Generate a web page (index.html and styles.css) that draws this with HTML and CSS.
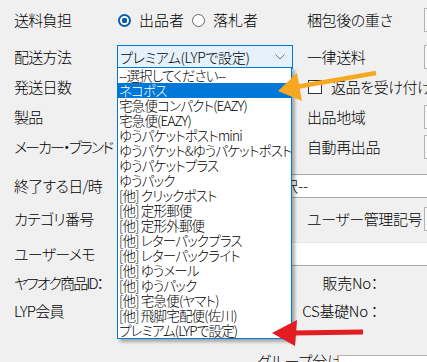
FILE: index.html
```html
<!DOCTYPE html>
<html lang="ja">
<head>
  <meta charset="UTF-8">
  <title>配送方法</title>
  <link rel="stylesheet" href="styles.css">
</head>
<body>

<div class="page">
  <div class="form">
    <!-- 送料負担 -->
    <div class="row">
      <div class="label">送料負担</div>
      <div class="field radios">
        <span class="radio"><span class="dot on"></span>出品者</span>
        <span class="radio"><span class="dot"></span>落札者</span>
      </div>
      <div class="side"><span class="side-label">梱包後の重さ</span><span class="box"></span></div>
    </div>

    <!-- 配送方法 -->
    <div class="row row-ship">
      <div class="label">配送方法</div>
      <div class="field">
        <div class="select">
          <span>プレミアム(LYPで設定)</span>
          <svg class="chevron" width="10" height="6" viewBox="0 0 10 6"><polyline points="0.5,0.5 5,5 9.5,0.5" fill="none" stroke="#777" stroke-width="1"/></svg>
        </div>
        <ul class="options">
          <li>--選択してください--</li>
          <li class="active">ネコポス</li>
          <li>宅急便コンパクト(EAZY)</li>
          <li>宅急便(EAZY)</li>
          <li>ゆうパケットポストmini</li>
          <li>ゆうパケット&amp;ゆうパケットポスト</li>
          <li>ゆうパケットプラス</li>
          <li>ゆうパック</li>
          <li>[他] クリックポスト</li>
          <li>[他] 定形郵便</li>
          <li>[他] 定形外郵便</li>
          <li>[他] レターパックプラス</li>
          <li>[他] レターパックライト</li>
          <li>[他] ゆうメール</li>
          <li>[他] ゆうパック</li>
          <li>[他] 宅急便(ヤマト)</li>
          <li>[他] 飛脚宅配便(佐川)</li>
          <li>プレミアム(LYPで設定)</li>
        </ul>
      </div>
      <div class="side"><span class="side-label">一律送料</span><span class="box"></span></div>
    </div>

    <!-- 発送日数 -->
    <div class="row row-std">
      <div class="label">発送日数</div>
      <div class="field"></div>
      <div class="side"><span class="check"></span>返品を受け付ける</div>
    </div>

    <!-- 製品 -->
    <div class="row row-std">
      <div class="label">製品</div>
      <div class="field"></div>
      <div class="side"><span class="side-label">出品地域</span><span class="box"></span></div>
    </div>

    <!-- メーカー・ブランド -->
    <div class="row row-std">
      <div class="label label-long">メーカー・ブランド</div>
      <div class="field"></div>
      <div class="side"><span class="side-label">自動再出品</span><span class="box"></span></div>
    </div>

    <!-- 終了する日/時 -->
    <div class="row row-end">
      <div class="label">終了する日/時</div>
      <div class="date-box"></div>
      <div class="time-select">--選択--</div>
    </div>

    <!-- カテゴリ番号 -->
    <div class="row row-cat">
      <div class="label">カテゴリ番号</div>
      <div class="field"></div>
      <div class="side"><span class="side-label">ユーザー管理記号</span><span class="box"></span></div>
    </div>

    <!-- ユーザーメモ -->
    <div class="row row-memo">
      <div class="label">ユーザーメモ</div>
      <div class="memo-input"></div>
    </div>

    <!-- ヤフオク商品ID -->
    <div class="row row-id">
      <div class="label label-long">ヤフオク商品ID：</div>
      <div class="field"></div>
      <div class="side-right">販売No：</div>
    </div>

    <!-- LYP会員 -->
    <div class="row row-lyp">
      <div class="label">LYP会員</div>
      <div class="field"></div>
      <div class="side-right">CS基礎No ：</div>
    </div>

    <!-- グループ分け -->
    <div class="row row-group">
      <div class="label"></div>
      <div class="group-label">グループ分け</div>
      <div class="group-input"></div>
    </div>
  </div>

  <!-- 注釈の矢印 -->
  <svg class="arrows" width="427" height="362" viewBox="0 0 427 362">
    <line x1="376" y1="73" x2="296" y2="87" stroke="#f7a823" stroke-width="4.5"/>
    <polygon points="278,91 297,73 302,101" fill="#f7a823"/>
    <line x1="363" y1="332" x2="292" y2="333" stroke="#e31b23" stroke-width="5"/>
    <polygon points="272,333 297,320 295,346" fill="#e31b23"/>
  </svg>
</div>

</body>
</html>
```

FILE: styles.css
```css
body {
  margin: 0;
  background-color: #f0f0f0;
  font-family: "Noto Sans CJK JP", "Noto Sans", sans-serif;
  font-size: 15px;
  font-weight: 300;
  color: #000;
  font-feature-settings: "palt";
  overflow: hidden;
}

.page {
  position: relative;
  width: 427px;
  height: 362px;
  overflow: hidden;
}

.form {
  padding: 10px 0 0 14px;
}

.row {
  display: flex;
  align-items: center;
  height: 20px;
  line-height: 20px;
  white-space: nowrap;
}

.row-ship { margin-top: 17px; }
.row-std { margin-top: 10px; }
.row-end { margin-top: 19px; }
.row-cat { margin-top: 13px; }
.row-memo { margin-top: 15px; }
.row-id { margin-top: 9px; }
.row-lyp { margin-top: 8px; }
.row-group { margin-top: 30px; }

.label {
  width: 103px;
  flex: none;
  letter-spacing: -0.7px;
}

.label-long {
  letter-spacing: -1.9px;
}

.field {
  width: 176px;
  flex: none;
  position: relative;
}

.side {
  margin-left: 14px;
  display: flex;
  align-items: center;
  letter-spacing: -0.4px;
}

.side-label {
  width: 117px;
  flex: none;
}

.box {
  width: 40px;
  height: 24px;
  box-sizing: border-box;
  border: 1px solid #b4b4b4;
  background-color: #f7f7f7;
  flex: none;
}

/* radio buttons */
.radios {
  display: flex;
  align-items: center;
}

.radio {
  display: inline-flex;
  align-items: center;
  margin-right: 7px;
}

.dot {
  width: 13px;
  height: 13px;
  box-sizing: border-box;
  border: 1px solid #666;
  border-radius: 50%;
  background-color: #fff;
  margin-left: 1px;
  margin-right: 8px;
}

.dot.on {
  border: 2px solid #0b5cad;
  background: radial-gradient(circle, #0b5cad 0 2.6px, #fff 3px);
}

/* select + open list */
.select {
  height: 24px;
  box-sizing: border-box;
  border: 1px solid #0078d7;
  background-color: #e5f1fb;
  padding-left: 2px;
  display: flex;
  align-items: center;
  font-size: 14px;
  letter-spacing: -0.3px;
}

.chevron {
  margin-left: auto;
  margin-right: 7px;
}

.options {
  position: absolute;
  left: 0;
  top: 22px;
  width: 175px;
  margin: 0;
  padding: 0;
  list-style: none;
  box-sizing: border-box;
  border: 1px solid #0078d7;
  background-color: #fff;
  box-shadow: 3px 3px 3px rgba(0, 0, 0, 0.3);
  font-size: 13.5px;
  line-height: 15px;
  overflow: hidden;
  z-index: 2;
}

.options li {
  height: 15px;
  padding-left: 1px;
  letter-spacing: -0.8px;
}

.options li.active {
  background-color: #0078d7;
  color: #fff;
}

/* checkbox */
.check {
  width: 14px;
  height: 14px;
  box-sizing: border-box;
  border: 1px solid #333;
  background-color: #fff;
  margin-left: 1px;
  margin-right: 9px;
  flex: none;
}

/* 終了する日/時 */
.date-box {
  width: 136px;
  flex: none;
}

.time-select {
  width: 200px;
  height: 24px;
  line-height: 22px;
  flex: none;
  box-sizing: border-box;
  border: 1px solid #a8a8a8;
  background-color: #fff;
  padding-left: 4px;
}

/* ユーザーメモ */
.memo-input {
  width: 330px;
  height: 24px;
  flex: none;
  box-sizing: border-box;
  border: 1px solid #e6e6e6;
  border-bottom-color: #a8a8a8;
  background-color: #fff;
}

.side-right {
  width: 85px;
  text-align: right;
  letter-spacing: -0.3px;
}

/* グループ分け */
.group-label {
  margin-left: 140px;
  width: 81px;
  flex: none;
}

.group-input {
  align-self: flex-start;
  margin-top: 4px;
  width: 100px;
  height: 24px;
  flex: none;
  box-sizing: border-box;
  border: 1px solid #b4b4b4;
  background-color: #fff;
}

.arrows {
  position: absolute;
  left: 0;
  top: 0;
  z-index: 3;
  pointer-events: none;
}
```
